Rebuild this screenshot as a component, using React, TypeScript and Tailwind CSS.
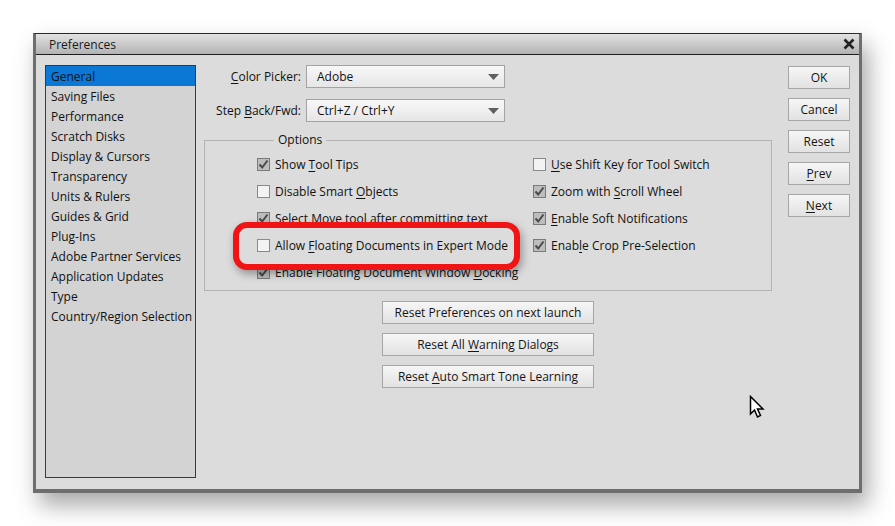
import React from 'react';

const FONT = "font-['Open_Sans','Liberation_Sans',sans-serif]";

const CATEGORIES = [
  'General',
  'Saving Files',
  'Performance',
  'Scratch Disks',
  'Display & Cursors',
  'Transparency',
  'Units & Rulers',
  'Guides & Grid',
  'Plug-Ins',
  'Adobe Partner Services',
  'Application Updates',
  'Type',
  'Country/Region Selection',
];

// label split into [before, underlined letter, after]
type Label = [string, string, string];

const Ul: React.FC<{ label: Label }> = ({ label }) => (
  <span className="whitespace-pre">
    {label[0]}
    {label[1] && <span className="underline underline-offset-2">{label[1]}</span>}
    {label[2]}
  </span>
);

const Checkbox: React.FC<{ checked: boolean }> = ({ checked }) => (
  <span
    className={`w-[13px] h-[13px] border flex items-center justify-center shrink-0 ${
      checked ? 'bg-[#bdbdbd] border-[#7a7a7a]' : 'bg-[#f3f3f3] border-[#8a8a8a]'
    }`}
  >
    {checked && (
      <svg width="11" height="11" viewBox="0 0 11 11">
        <path d="M1.5 5.5 L4.2 8.5 L9.5 1.5" fill="none" stroke="#4a4a4a" strokeWidth="2" />
      </svg>
    )}
  </span>
);

const CheckRow: React.FC<{ label: Label; checked: boolean }> = ({ label, checked }) => (
  <div className="h-[27px] flex items-center gap-[5px] whitespace-nowrap">
    <Checkbox checked={checked} />
    <Ul label={label} />
  </div>
);

const Button: React.FC<{ label: Label; className?: string }> = ({ label, className = '' }) => (
  <button
    className={`h-[23px] border border-[#a6a6a6] bg-gradient-to-b from-[#f6f6f6] to-[#e2e2e2] text-[#151515] flex items-center justify-center ${className}`}
  >
    <Ul label={label} />
  </button>
);

const Select: React.FC<{ value: string }> = ({ value }) => (
  <div className="w-[199px] h-[23px] border border-[#a3a3a3] bg-gradient-to-b from-[#f8f8f8] to-[#e6e6e6] flex items-center justify-between pl-[10px] pr-[5px]">
    <span>{value}</span>
    <svg width="11" height="6" viewBox="0 0 11 6">
      <path d="M0 0 H11 L5.5 6 Z" fill="#606060" />
    </svg>
  </div>
);

const Cursor = () => (
  <svg width="18" height="24" viewBox="0 0 18 24" className="absolute left-[749px] top-[395px]">
    <path
      d="M1.5 1.5 V19 L5.5 15 L8.5 22 L11.5 20.5 L8.5 14 H14 Z"
      fill="#fff"
      stroke="#000"
      strokeWidth="1.5"
      strokeLinejoin="miter"
    />
  </svg>
);

export default function App() {
  return (
    <div className={`w-[895px] h-[526px] bg-white relative pt-[33px] pl-[33px] text-[12px] text-[#111] ${FONT}`}>
      <div className="w-[829px] h-[460px] flex flex-col border-t border-t-[#2a2a2a] border-x-[3px] border-b-[4px] border-x-[#6e6e6e] border-b-[#6e6e6e] shadow-[6px_12px_22px_rgba(0,0,0,0.35)]">
        {/* Title bar */}
        <div className="h-[21px] shrink-0 bg-gradient-to-b from-[#e2e2e2] to-[#b3b3b3] border-b border-[#1e1e1e] flex items-center justify-between pl-[13px] pr-[4px] pt-[2px]">
          <span className="text-[12px] text-[#1a1a1a]">Preferences</span>
          <svg width="12" height="12" viewBox="0 0 12 12" className="-mt-[2px]">
            <path d="M1.5 1.5 L10.5 10.5 M10.5 1.5 L1.5 10.5" stroke="#222" strokeWidth="2.6" />
          </svg>
        </div>

        {/* Body */}
        <div className="flex-1 bg-[#dcdcdc] flex pl-[9px] pt-[10px] pb-[11px] pr-[9px]">
          {/* Category list */}
          <div className="w-[151px] border border-[#3a3a3a] bg-[#d3d3d3] flex flex-col">
            {CATEGORIES.map((c, i) => (
              <div
                key={c}
                className={`h-[20px] flex items-center pl-[5px] pt-[2px] whitespace-nowrap ${
                  i === 0 ? 'bg-[#0b78d6]' : ''
                }`}
              >
                {c}
              </div>
            ))}
          </div>

          {/* Main column */}
          <div className="w-[568px] ml-[8px] flex flex-col">
            <div className="flex flex-col gap-[11px]">
              <div className="flex items-center gap-[5px]">
                <span className="w-[97px] text-right">
                  <Ul label={['', 'C', 'olor Picker:']} />
                </span>
                <Select value="Adobe" />
              </div>
              <div className="flex items-center gap-[5px]">
                <span className="w-[97px] text-right">
                  <Ul label={['Step ', 'B', 'ack/Fwd:']} />
                </span>
                <Select value="Ctrl+Z / Ctrl+Y" />
              </div>
            </div>

            <fieldset className="mt-[10px] h-[159px] border border-[#b4b4b4] pl-[52px] pt-[3px]">
              <legend className="ml-[17px] px-[4px] leading-[16px]">Options</legend>
              <div className="grid grid-cols-[276px_auto]">
                <div className="flex flex-col">
                  <CheckRow label={['Show ', 'T', 'ool Tips']} checked />
                  <CheckRow label={['Disable Smart ', 'O', 'bjects']} checked={false} />
                  <CheckRow label={['Select Move tool after committing text', '', '']} checked />
                  {/* highlighted row, pasted over its neighbours */}
                  <div className="relative z-10 h-[27px]">
                    <div className="absolute left-[-24px] top-[-10px] w-[287px] h-[48px] rounded-[14px] border-[6px] border-[#f01414] bg-[#dcdcdc] shadow-[2px_4px_8px_rgba(0,0,0,0.35)]" />
                    <div className="relative">
                      <CheckRow label={['Allow ', 'F', 'loating Documents in Expert Mode']} checked={false} />
                    </div>
                  </div>
                  <CheckRow label={['Enable Floating Document Window ', 'D', 'ocking']} checked />
                </div>
                <div className="flex flex-col">
                  <CheckRow label={['', 'U', 'se Shift Key for Tool Switch']} checked={false} />
                  <CheckRow label={['Zoom with ', 'S', 'croll Wheel']} checked />
                  <CheckRow label={['', 'E', 'nable Soft Notifications']} checked />
                  <CheckRow label={['Enab', 'l', 'e Crop Pre-Selection']} checked />
                </div>
              </div>
            </fieldset>

            <div className="mt-[10px] flex flex-col items-center gap-[9px]">
              <Button className="w-[212px]" label={['Reset Preferences on next launch', '', '']} />
              <Button className="w-[212px]" label={['Reset All ', 'W', 'arning Dialogs']} />
              <Button className="w-[212px]" label={['Reset ', 'A', 'uto Smart Tone Learning']} />
            </div>
          </div>

          {/* Dialog buttons */}
          <div className="ml-[16px] pt-[1px] flex flex-col gap-[9px]">
            <Button className="w-[62px]" label={['OK', '', '']} />
            <Button className="w-[62px]" label={['Cancel', '', '']} />
            <Button className="w-[62px]" label={['Reset', '', '']} />
            <Button className="w-[62px]" label={['', 'P', 'rev']} />
            <Button className="w-[62px]" label={['', 'N', 'ext']} />
          </div>
        </div>
      </div>
      <Cursor />
    </div>
  );
}
